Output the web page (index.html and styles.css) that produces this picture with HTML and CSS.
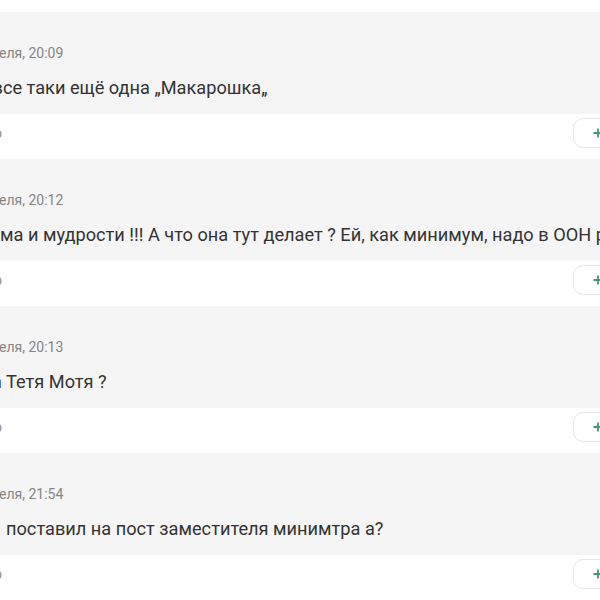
FILE: index.html
```html
<!DOCTYPE html>
<html lang="ru">
<head>
<meta charset="utf-8">
<link rel="stylesheet" href="styles.css">
</head>
<body>
<div class="list">
  <div class="comment">
    <div class="body">
      <div class="date cut-date">еля, 20:09</div>
      <div class="text cut-1">все таки ещё одна „Макарошка„</div>
    </div>
    <div class="footer">
      <span class="reply">о</span>
      <button class="plus-btn"><svg width="10" height="10" viewBox="0 0 10 10"><path d="M5 0.5v9M0.5 5h9" stroke="#3f9b72" stroke-width="1.8" fill="none"/></svg></button>
    </div>
  </div>
  <div class="comment">
    <div class="body">
      <div class="date cut-date">еля, 20:12</div>
      <div class="text cut-2">ма и мудрости !!! А что она тут делает ? Ей, как минимум, надо в ООН руководить</div>
    </div>
    <div class="footer">
      <span class="reply">о</span>
      <button class="plus-btn"><svg width="10" height="10" viewBox="0 0 10 10"><path d="M5 0.5v9M0.5 5h9" stroke="#3f9b72" stroke-width="1.8" fill="none"/></svg></button>
    </div>
  </div>
  <div class="comment">
    <div class="body">
      <div class="date cut-date">еля, 20:13</div>
      <div class="text cut-3">а Тетя Мотя ?</div>
    </div>
    <div class="footer">
      <span class="reply">о</span>
      <button class="plus-btn"><svg width="10" height="10" viewBox="0 0 10 10"><path d="M5 0.5v9M0.5 5h9" stroke="#3f9b72" stroke-width="1.8" fill="none"/></svg></button>
    </div>
  </div>
  <div class="comment">
    <div class="body">
      <div class="date cut-date">еля, 21:54</div>
      <div class="text cut-4">поставил на пост заместителя минимтра а?</div>
    </div>
    <div class="footer">
      <span class="reply">о</span>
      <button class="plus-btn"><svg width="10" height="10" viewBox="0 0 10 10"><path d="M5 0.5v9M0.5 5h9" stroke="#3f9b72" stroke-width="1.8" fill="none"/></svg></button>
    </div>
  </div>
</div>
</body>
</html>
```

FILE: styles.css
```css
html, body {
  margin: 0;
  padding: 0;
  background: #ffffff;
  overflow: hidden;
  width: 600px;
  height: 600px;
}
body {
  font-family: Roboto, "Liberation Sans", sans-serif;
}
.list {
  width: 640px;
  padding-top: 12px;
}
.comment {
  display: flex;
  flex-direction: column;
}
.body {
  background: #f5f5f5;
  height: 102px;
  box-sizing: border-box;
  padding-top: 32px;
  display: flex;
  flex-direction: column;
  gap: 14px;
  overflow: hidden;
}
.date {
  font-size: 14px;
  line-height: 18px;
  color: #858585;
  white-space: nowrap;
}
.text {
  font-size: 18.2px;
  line-height: 24px;
  color: #333333;
  white-space: nowrap;
}
.cut-date { margin-left: -1px; }
.cut-1 { margin-left: -7.5px; }
.cut-2 { margin-left: 0; }
.cut-3 { margin-left: -8px; }
.cut-4 { margin-left: 6px; }
.footer {
  height: 45px;
  box-sizing: border-box;
  padding: 4px 11px 11px 0;
  display: flex;
  align-items: center;
  justify-content: space-between;
}
.reply {
  font-size: 14px;
  color: #8c8c8c;
  margin-left: -6px;
}
.plus-btn {
  width: 56px;
  height: 30px;
  box-sizing: border-box;
  border: 1px solid #e6e6e6;
  border-radius: 10px;
  background: #ffffff;
  padding: 0 0 0 19px;
  display: flex;
  align-items: center;
}
.plus-btn svg {
  display: block;
}
```
